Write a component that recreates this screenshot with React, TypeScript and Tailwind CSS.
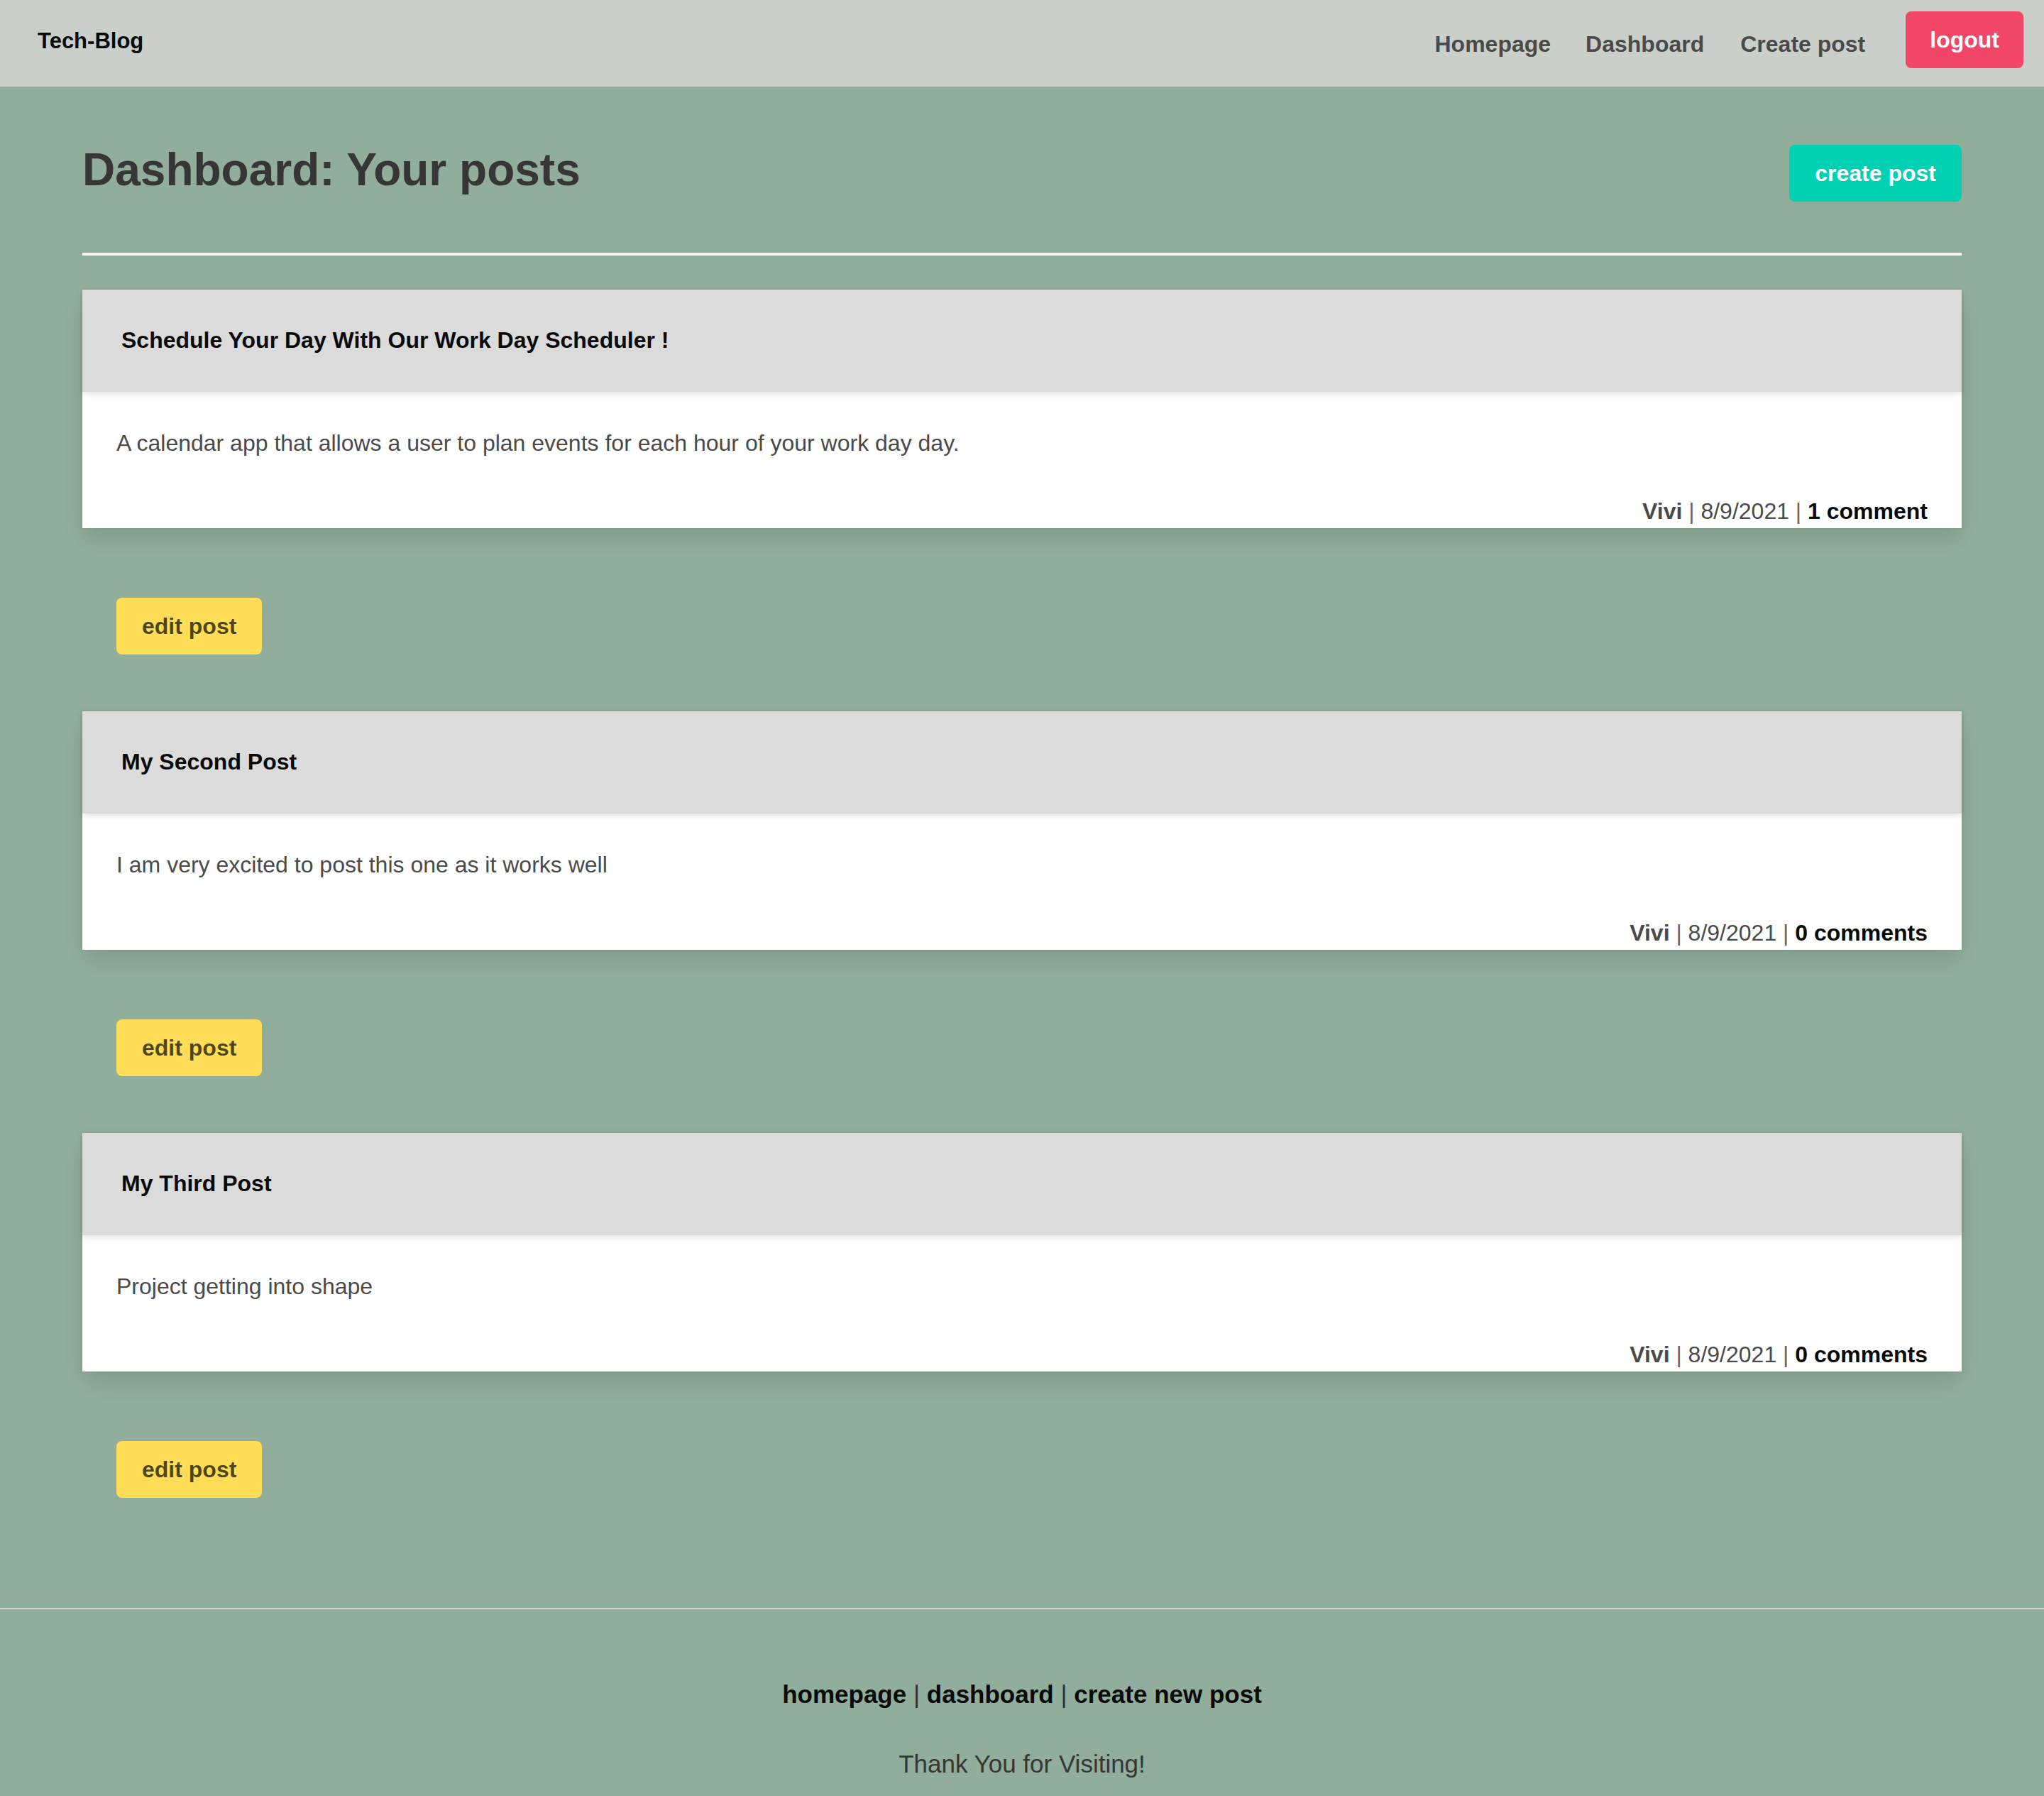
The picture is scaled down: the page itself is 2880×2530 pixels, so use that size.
const POSTS = [
  {
    title: "Schedule Your Day With Our Work Day Scheduler !",
    body: "A calendar app that allows a user to plan events for each hour of your work day day.",
    author: "Vivi",
    date: "8/9/2021",
    comments: "1 comment",
  },
  {
    title: "My Second Post",
    body: "I am very excited to post this one as it works well",
    author: "Vivi",
    date: "8/9/2021",
    comments: "0 comments",
  },
  {
    title: "My Third Post",
    body: "Project getting into shape",
    author: "Vivi",
    date: "8/9/2021",
    comments: "0 comments",
  },
];

function Navbar() {
  return (
    <nav className="flex h-[122px] items-start justify-between bg-[#cad0c9]">
      <a href="#" className="ml-[53px] mt-[42px] text-[31px] font-bold leading-none text-[#0a0a0a]">
        Tech-Blog
      </a>
      <div className="mr-[29px] flex items-start">
        <a href="#" className="mt-[46px] text-[32px] font-bold leading-none text-[#4a4a4a]">
          Homepage
        </a>
        <a href="#" className="ml-[49px] mt-[46px] text-[32px] font-bold leading-none text-[#4a4a4a]">
          Dashboard
        </a>
        <a href="#" className="ml-[51px] mt-[46px] text-[32px] font-bold leading-none text-[#4a4a4a]">
          Create post
        </a>
        <button className="ml-[57px] mt-[16px] flex h-[80px] items-center rounded-[8px] bg-[#f14668] px-[34px] text-[32px] font-bold text-white">
          logout
        </button>
      </div>
    </nav>
  );
}

function PostCard({ post }: { post: (typeof POSTS)[number] }) {
  return (
    <div>
      <div className="bg-white shadow-[0_16px_32px_-4px_rgba(10,10,10,0.12),0_0_0_2px_rgba(10,10,10,0.02)]">
        <header className="flex h-[144px] items-center bg-[#dbdbdb] px-[55px] pb-[3px] shadow-[0_3px_8px_rgba(10,10,10,0.12)]">
          <p className="text-[32px] font-bold leading-[48px] text-[#0a0a0a]">{post.title}</p>
        </header>
        <div className="px-[48px] pt-[48px]">
          <p className="text-[32px] leading-[48px] text-[#4a4a4a]">{post.body}</p>
          <p className="mb-[2px] mt-[48px] text-right text-[32px] leading-[48px] text-[#4a4a4a]">
            <span className="font-bold">{post.author}</span> <span className="text-[#666]">|</span> {post.date}{" "}
            <span className="text-[#666]">|</span> <span className="font-bold text-[#0a0a0a]">{post.comments}</span>
          </p>
        </div>
      </div>
      <div className="px-[48px] pb-[80px] pt-[96px]">
        <button className="flex h-[80px] items-center rounded-[8px] bg-[#ffdd57] px-[36px] text-[32px] font-bold text-[rgba(0,0,0,0.7)]">
          edit post
        </button>
      </div>
    </div>
  );
}

export default function App() {
  return (
    <div className="min-h-screen bg-[#91ad9b] font-['Liberation_Sans',Arial,sans-serif]">
      <Navbar />
      <main className="px-[116px] pb-[75px] pt-[82px]">
        <div className="flex items-start justify-between">
          <h1 className="text-[64px] font-bold leading-[70px] text-[#363636]">Dashboard: Your posts</h1>
          <button className="flex h-[80px] items-center rounded-[8px] bg-[#00d1b2] px-[36px] text-[32px] font-bold text-white">
            create post
          </button>
        </div>
        <hr className="mb-[48px] mt-[72px] h-[4px] border-0 bg-[#f5f5f5]" />
        {POSTS.map((p) => (
          <PostCard key={p.title} post={p} />
        ))}
      </main>
      <footer className="border-t-2 border-[#d0d0d0] pb-[192px] pt-[94px] text-center">
        <p className="text-[35px] leading-[52px] text-[#0a0a0a]">
          <a href="#" className="font-bold">homepage</a> <span className="text-[#333]">|</span>{" "}
          <a href="#" className="font-bold">dashboard</a> <span className="text-[#333]">|</span>{" "}
          <a href="#" className="font-bold">create new post</a>
        </p>
        <p className="mt-[46px] text-[35px] leading-[52px] text-[#363636]">Thank You for Visiting!</p>
      </footer>
    </div>
  );
}
